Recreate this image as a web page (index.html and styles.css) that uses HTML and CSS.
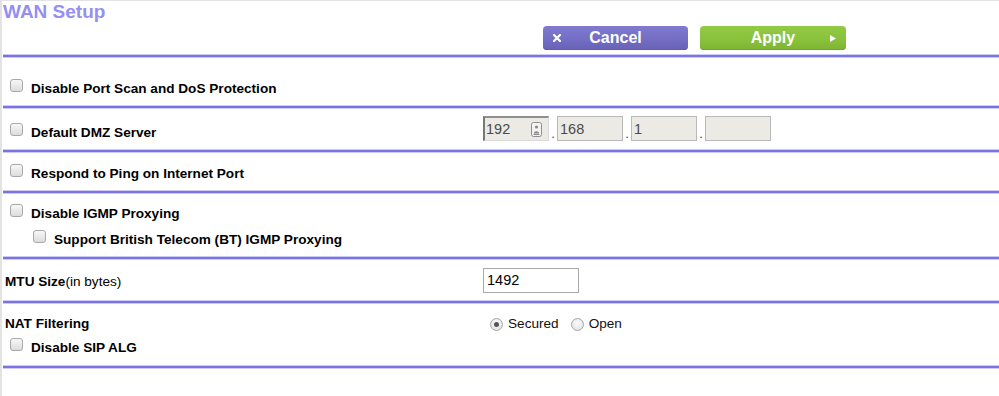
FILE: index.html
```html
<!DOCTYPE html>
<html>
<head>
<meta charset="utf-8">
<title>WAN Setup</title>
<link rel="stylesheet" href="styles.css">
</head>
<body>
<div class="page">
  <header class="head">
    <h1 class="title">WAN Setup</h1>
    <div class="actions">
      <button class="btn btn-cancel" type="button">
        <span class="ico ico-left"><svg width="8" height="8" viewBox="0 0 8 8"><path d="M1 1L7 7M7 1L1 7" stroke="#fff" stroke-width="2.2" stroke-linecap="square"/></svg></span>
        <span class="lbl">Cancel</span>
        <span class="ico"></span>
      </button>
      <button class="btn btn-apply" type="button">
        <span class="ico"></span>
        <span class="lbl">Apply</span>
        <span class="ico ico-right"><svg width="6" height="7" viewBox="0 0 6 7"><path d="M0 0L6 3.5L0 7Z" fill="#fff"/></svg></span>
      </button>
    </div>
  </header>
  <div class="sep"></div>

  <section class="sec s1">
    <div class="row">
      <div class="check"><span class="cb"></span><b>Disable Port Scan and DoS Protection</b></div>
    </div>
  </section>
  <div class="sep"></div>

  <section class="sec s2">
    <div class="row">
      <div class="check"><span class="cb"></span><b>Default DMZ Server</b></div>
      <div class="ip">
        <span class="box box-first"><span class="val">192</span><svg class="kico" width="11" height="15" viewBox="0 0 11 15"><rect x="0.5" y="0.5" width="10" height="14" rx="2" fill="#f3f3ef" stroke="#8e8e8e"/><circle cx="5.5" cy="5" r="1.6" fill="#8a8a8a"/><path d="M2.8 11.5C2.8 8.6 8.2 8.6 8.2 11.5Z" fill="#8a8a8a"/><path d="M2.5 12.5H8.5" stroke="#8a8a8a" stroke-width="1"/></svg></span>
        <span class="dot">.</span>
        <span class="box"><span class="val">168</span></span>
        <span class="dot">.</span>
        <span class="box"><span class="val">1</span></span>
        <span class="dot">.</span>
        <span class="box"><span class="val"></span></span>
      </div>
    </div>
  </section>
  <div class="sep"></div>

  <section class="sec s3">
    <div class="row">
      <div class="check"><span class="cb"></span><b>Respond to Ping on Internet Port</b></div>
    </div>
  </section>
  <div class="sep"></div>

  <section class="sec s4">
    <div class="row">
      <div class="check"><span class="cb"></span><b>Disable IGMP Proxying</b></div>
    </div>
    <div class="row">
      <div class="check sub"><span class="cb"></span><b>Support British Telecom (BT) IGMP Proxying</b></div>
    </div>
  </section>
  <div class="sep"></div>

  <section class="sec s5">
    <div class="row">
      <div class="label"><b>MTU Size</b>(in bytes)</div>
      <div class="mtu"><span class="val">1492</span></div>
    </div>
  </section>
  <div class="sep"></div>

  <section class="sec s6">
    <div class="row short">
      <div class="label"><b>NAT Filtering</b></div>
      <div class="radios">
        <span class="rb on"></span><span class="rlbl">Secured</span>
        <span class="rb"></span><span class="rlbl">Open</span>
      </div>
    </div>
    <div class="row short">
      <div class="check"><span class="cb"></span><b>Disable SIP ALG</b></div>
    </div>
  </section>
  <div class="sep"></div>
</div>
</body>
</html>
```

FILE: styles.css
```css
html, body {
  margin: 0;
  padding: 0;
  background: #fff;
}

body {
  font-family: "Liberation Sans", Arial, sans-serif;
  font-size: 13.6px;
  color: #000;
}

.page {
  width: 996px;
  min-height: 395px;
  border-left: 2px solid #e3e3e3;
  border-top: 1px solid #e3e3e3;
  padding-left: 1px;
}

.head {
  padding-bottom: 5px;
}

.title {
  margin: 1px 0 0 0;
  font-size: 19px;
  line-height: 20px;
  font-weight: bold;
  color: #968ff2;
}

.actions {
  display: flex;
  gap: 12px;
  margin: 4px 0 0 540px;
}

.btn {
  display: grid;
  grid-template-columns: 8px 1fr 8px;
  align-items: center;
  height: 24px;
  padding: 0 10px;
  border: 0;
  border-radius: 4px;
  font-family: "Liberation Sans", Arial, sans-serif;
  font-size: 16px;
  font-weight: bold;
  color: #fff;
  cursor: pointer;
}

.btn .lbl {
  text-align: center;
  line-height: 24px;
}

.ico {
  display: flex;
  align-items: center;
}

.ico-right {
  justify-content: flex-end;
}

.btn-cancel {
  width: 145px;
  background: linear-gradient(#807bd0, #726cc2 60%, #6863b6);
  box-shadow: inset 0 -1px 0 #5e59a8;
}

.btn-apply {
  width: 146px;
  background: linear-gradient(#93ca45, #88c13b 60%, #7db433);
  box-shadow: inset 0 -1px 0 #72a52b;
}

.sep {
  height: 2px;
  background: #7a73e6;
  box-shadow: 0 -1px 0 #cdcaf6, 0 1px 0 #cdcaf6;
}

.sec {
  display: flex;
  flex-direction: column;
}

.s1 { padding: 19px 0 4px; }
.s2 { padding: 12px 0 4px; }
.s3 { padding: 9px 0 4px; }
.s4 { padding: 8px 0 4px; }
.s5 { padding: 9px 0 7px; }
.s6 { padding: 9px 0 6px; }

.row {
  display: grid;
  grid-template-columns: 480px 1fr;
  align-items: center;
  height: 26px;
  line-height: 26px;
}

.row.short {
  height: 24px;
  line-height: 24px;
}

.check {
  display: flex;
  align-items: center;
  padding-left: 7px;
  white-space: nowrap;
}

.check.sub {
  padding-left: 30px;
}

.cb {
  flex: none;
  width: 11px;
  height: 11px;
  margin: 0 8px 7px 0;
  border: 1px solid #a9a9a9;
  border-radius: 3px;
  background: linear-gradient(#f7f7f7, #dcdcdc);
}

.label {
  padding-left: 2px;
  white-space: nowrap;
}

.ip {
  display: flex;
  align-items: flex-end;
  align-self: start;
  margin-top: -4px;
}

.box {
  display: flex;
  align-items: center;
  justify-content: space-between;
  box-sizing: border-box;
  width: 66px;
  height: 25px;
  padding: 0 6px 0 2px;
  border: 1px solid #b9b9b9;
  background: #ebeae4;
  font-size: 14.5px;
  line-height: 20px;
  color: #4a4a4a;
}

.box-first {
  border-width: 2px 1px 1px 2px;
  border-color: #8f8f8f #dadada #dadada #777;
  padding-left: 1px;
}

.kico {
  display: block;
}

.dot {
  width: 8px;
  text-align: center;
  font-size: 13px;
  line-height: 14px;
  color: #444;
}

.mtu {
  box-sizing: border-box;
  width: 96px;
  height: 25px;
  margin-bottom: 2px;
  border: 1px solid #a9a9a9;
  background: #fff;
  padding-left: 3px;
  font-size: 14.5px;
  line-height: 23px;
  color: #000;
}

.radios {
  display: flex;
  align-items: center;
  padding-left: 7px;
  font-size: 13.6px;
}

.rb {
  box-sizing: border-box;
  width: 13px;
  height: 13px;
  border: 1px solid #a6a6a6;
  border-radius: 50%;
  background: radial-gradient(circle at 50% 40%, #fbfbfb, #dedede);
  display: flex;
  align-items: center;
  justify-content: center;
}

.rb.on::after {
  content: "";
  width: 5px;
  height: 5px;
  border-radius: 50%;
  background: #555;
}

.rlbl {
  margin-left: 5px;
  margin-right: 12px;
  color: #111;
}
```
